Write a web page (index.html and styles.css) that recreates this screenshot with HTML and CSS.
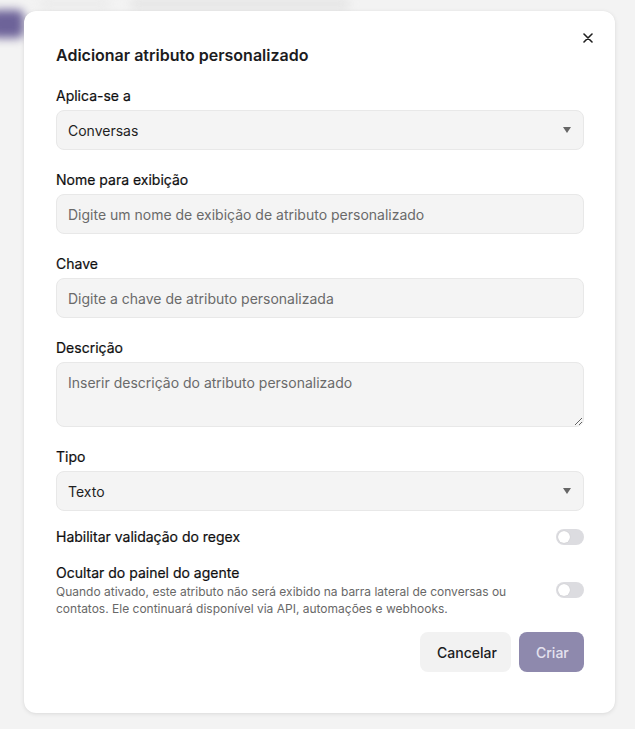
FILE: index.html
```html
<!DOCTYPE html>
<html lang="pt-BR">
<head>
<meta charset="utf-8">
<title>Adicionar atributo personalizado</title>
<link rel="stylesheet" href="styles.css">
</head>
<body>
<div class="backdrop">
  <div class="bg-blob"></div>
  <div class="bg-bar bar-a"></div>
  <div class="bg-bar bar-b"></div>
</div>
<div class="overlay">
  <div class="modal">
    <button class="close" aria-label="Fechar">
      <svg width="10" height="10" viewBox="0 0 10 10"><path d="M1 1L9 9M9 1L1 9" stroke="#1f1f1f" stroke-width="1.6" stroke-linecap="round"/></svg>
    </button>
    <h2 class="title">Adicionar atributo personalizado</h2>
    <div class="field">
      <label class="label">Aplica-se a</label>
      <div class="control select"><span>Conversas</span><span class="arrow"></span></div>
    </div>
    <div class="field">
      <label class="label">Nome para exibição</label>
      <input class="control" placeholder="Digite um nome de exibição de atributo personalizado">
    </div>
    <div class="field">
      <label class="label">Chave</label>
      <input class="control" placeholder="Digite a chave de atributo personalizada">
    </div>
    <div class="field">
      <label class="label">Descrição</label>
      <textarea class="control area" placeholder="Inserir descrição do atributo personalizado"></textarea>
    </div>
    <div class="field">
      <label class="label">Tipo</label>
      <div class="control select"><span>Texto</span><span class="arrow"></span></div>
    </div>
    <div class="toggle-row first">
      <div class="toggle-text"><div class="label">Habilitar validação do regex</div></div>
      <span class="switch"><span class="knob"></span></span>
    </div>
    <div class="toggle-row">
      <div class="toggle-text">
        <div class="label">Ocultar do painel do agente</div>
        <p class="help">Quando ativado, este atributo não será exibido na barra lateral de conversas ou contatos. Ele continuará disponível via API, automações e webhooks.</p>
      </div>
      <span class="switch"><span class="knob"></span></span>
    </div>
    <div class="actions">
      <button class="btn btn-cancel">Cancelar</button>
      <button class="btn btn-primary">Criar</button>
    </div>
  </div>
</div>
</body>
</html>
```
FILE: styles.css
```css
* { box-sizing: border-box; }
html, body { margin: 0; padding: 0; }
body {
  background: #f3f3f3;
  font-family: "Inter", "Noto Sans", sans-serif;
  color: #1c1c1e;
  width: 635px;
  height: 729px;
  overflow: hidden;
  position: relative;
}
.backdrop { position: absolute; inset: 0; overflow: hidden; }
.bg-blob {
  position: absolute; left: -10px; top: 10px; width: 34px; height: 28px;
  background: #6d6399; filter: blur(5px); border-radius: 6px;
}
.bg-bar {
  position: absolute; height: 12px; background: #e6e6e6; filter: blur(4px); border-radius: 6px;
}
.bar-a { left: 130px; top: -2px; width: 220px; }
.bar-b { left: 40px; top: -2px; width: 70px; background: #ececec; }
.overlay {
  position: relative;
  padding: 11px 0 0 24px;
}
.modal {
  position: relative;
  width: 591px;
  height: 702px;
  background: #ffffff;
  border-radius: 12px;
  box-shadow: 0 1px 4px rgba(0,0,0,0.10), 0 0 1px rgba(0,0,0,0.06);
  padding: 32px 31px 0 32px;
  display: flex;
  flex-direction: column;
}
.close {
  position: absolute; top: 22px; right: 22px;
  width: 10px; height: 10px; padding: 0; border: 0; background: none;
  display: flex;
}
.title {
  margin: 0 0 19px;
  font-size: 16px; line-height: 24px; font-weight: 600; color: #1c1c1e;
}
.field { display: flex; flex-direction: column; gap: 4px; margin-bottom: 20px; }
.label { font-size: 14px; line-height: 20px; font-weight: 400; color: #0f0f10; -webkit-text-stroke: 0.2px #0f0f10; }
.control {
  width: 528px; height: 40px;
  background: #f4f4f4;
  border: 1px solid #e8e8e8;
  border-radius: 8px;
  padding: 0 11px;
  font-family: inherit; font-size: 14px; color: #1f1f1f;
  outline: none;
}
.control::placeholder { color: #6a6a6a; }
.select { display: flex; align-items: center; justify-content: space-between; padding-right: 12px; }
.arrow {
  width: 0; height: 0;
  border-left: 4px solid transparent; border-right: 4px solid transparent;
  border-top: 6px solid #666;
}
.area { height: 65px; padding: 10px 11px; resize: vertical; line-height: 20px; }
.toggle-row {
  display: flex; align-items: center; justify-content: space-between;
  margin-top: 16px;
}
.toggle-row.first { margin-top: -4px; }
.toggle-text { width: 480px; }
.help { margin: 0; font-size: 12px; line-height: 17px; color: #686868; }
.switch {
  width: 28px; height: 16px; border-radius: 8px; background: #dcdce0;
  display: flex; align-items: center; padding: 2px; flex: none;
}
.knob { width: 12px; height: 12px; border-radius: 50%; background: #fff; box-shadow: 0 0 1px rgba(0,0,0,0.2); }
.actions { display: flex; justify-content: flex-end; gap: 8px; margin-top: 15px; }
.btn {
  height: 40px; border: 0; border-radius: 8px;
  font-family: inherit; font-size: 14px; font-weight: 500;
  padding: 0 17px;
}
.btn-cancel { background: #f2f2f2; color: #1c1c1e; width: 91px; }
.btn-primary { background: #8e89ad; color: #e4e2ef; width: 65px; }
```
